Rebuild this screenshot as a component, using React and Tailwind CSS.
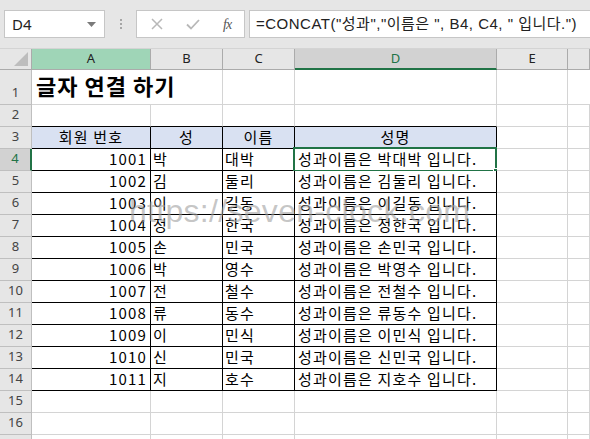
import React from "react";

const rows = [
  ["1001", "박", "대박"],
  ["1002", "김", "둘리"],
  ["1003", "이", "길동"],
  ["1004", "정", "한국"],
  ["1005", "손", "민국"],
  ["1006", "박", "영수"],
  ["1007", "전", "철수"],
  ["1008", "류", "동수"],
  ["1009", "이", "민식"],
  ["1010", "신", "민국"],
  ["1011", "지", "호수"],
];

const KR = { fontFamily: "'Noto Sans CJK KR', 'Noto Sans', sans-serif" };

function ColHeader({ label, variant }) {
  if (variant === "sel") {
    return (
      <div className="flex items-center justify-center bg-[#9fd5b7] border-r border-b border-[#ababab] text-[13px] text-[#222]" style={{ fontFamily: "'Noto Sans', sans-serif" }}>
        {label}
      </div>
    );
  }
  if (variant === "active") {
    return (
      <div className="flex items-center justify-center bg-[#d2d2d2] border-r border-[#ababab] border-b-2 border-b-[#217346] text-[13px] text-[#217346]" style={{ fontFamily: "'Noto Sans', sans-serif" }}>
        {label}
      </div>
    );
  }
  return (
    <div className="flex items-center justify-center bg-[#e6e6e6] border-r border-b border-[#ababab] text-[13px] text-[#222]" style={{ fontFamily: "'Noto Sans', sans-serif" }}>
      {label}
    </div>
  );
}

function RowHeader({ n, active }) {
  return (
    <div
      className={
        active
          ? "flex items-end justify-center pb-[2px] bg-[#d2d2d2] border-b border-[#bfbfbf] border-r-2 border-r-[#217346] text-[13px] text-[#217346]"
          : "flex items-end justify-center pb-[2px] bg-[#e6e6e6] border-b border-r border-[#bfbfbf] text-[13px] text-[#444]"
      }
      style={{ fontFamily: "'Noto Sans', sans-serif" }}
    >
      {n}
    </div>
  );
}

function Cell({ children, black, blackBottom, align = "left", header, className = "" }) {
  const border = black
    ? "border-r border-b border-black"
    : blackBottom
    ? "border-r border-[#d4d4d4] border-b border-b-black"
    : "border-r border-b border-[#d4d4d4]";
  const bg = header ? "bg-[#d9e1f2]" : "bg-white";
  const just = align === "right" ? "justify-end pr-[3px]" : align === "center" ? "justify-center" : "justify-start pl-[2px]";
  return (
    <div className={`relative flex items-end pb-[1px] ${border} ${bg} ${just} text-[15px] leading-[20px] tracking-[1.2px] text-black whitespace-nowrap ${className}`} style={KR}>
      {children}
    </div>
  );
}

export default function App() {
  return (
    <div className="relative w-[590px] h-[439px] overflow-hidden bg-white">
      {/* formula bar */}
      <div className="h-[49px] bg-[#e6e6e6] flex items-center border-b border-[#d4d4d4]">
        <div className="ml-[4px] w-[101px] h-[28px] bg-white border border-[#c6c6c6] flex items-center justify-between pl-[7px] pr-[8px]">
          <span className="text-[15px] text-[#222]" style={{ fontFamily: "'Noto Sans', sans-serif" }}>D4</span>
          <svg width="9" height="5" viewBox="0 0 9 5"><path d="M0 0 L9 0 L4.5 5 Z" fill="#7a7a7a" /></svg>
        </div>
        <div className="w-[31px] flex flex-col items-center gap-[2px]">
          <div className="w-[2px] h-[2px] bg-[#a6a6a6]" />
          <div className="w-[2px] h-[2px] bg-[#a6a6a6]" />
          <div className="w-[2px] h-[2px] bg-[#a6a6a6]" />
        </div>
        <div className="w-[109px] h-[28px] bg-white border border-[#c6c6c6] flex items-center">
          <div className="w-[40px] flex justify-center">
            <svg width="12" height="12" viewBox="0 0 12 12"><path d="M1 1 L11 11 M11 1 L1 11" stroke="#b8b8b8" strokeWidth="1.5" /></svg>
          </div>
          <div className="w-[34px] flex justify-center">
            <svg width="14" height="11" viewBox="0 0 14 11"><path d="M1 5.5 L5 9.5 L13 1" stroke="#b8b8b8" strokeWidth="1.8" fill="none" /></svg>
          </div>
          <div className="w-[34px] flex justify-center">
            <span className="text-[14px] italic text-[#555] tracking-[-1px]" style={{ fontFamily: "'Liberation Serif', serif" }}>fx</span>
          </div>
        </div>
        <div className="ml-[4px] flex-1 h-[28px] bg-white border border-r-0 border-[#c6c6c6] flex items-center pl-[6px] text-[15px] tracking-[0.5px] text-[#222] whitespace-nowrap" style={{ fontFamily: "'Liberation Sans', 'Noto Sans CJK KR', sans-serif" }}>
          =CONCAT("성과","이름은 ", B4, C4, " 입니다.")
        </div>
      </div>

      {/* sheet */}
      <div className="grid grid-cols-[32px_119px_72px_72px_202px_71px_1fr] grid-rows-[21px_35px_repeat(16,22px)]">
        {/* header row */}
        <div className="relative bg-[#e6e6e6] border-r border-b border-[#ababab]">
          <svg className="absolute right-[3px] bottom-[3px]" width="14" height="14" viewBox="0 0 14 14"><path d="M14 0 L14 14 L0 14 Z" fill="#bdbdbd" /></svg>
        </div>
        <ColHeader label="A" variant="sel" />
        <ColHeader label="B" />
        <ColHeader label="C" />
        <ColHeader label="D" variant="active" />
        <ColHeader label="E" />
        <ColHeader label="" />

        {/* row 1 */}
        <RowHeader n="1" />
        <div className="flex items-end pb-[6px] pl-[4px] border-b border-[#d4d4d4] text-[22px] font-bold leading-[26px] tracking-[1px] text-black whitespace-nowrap" style={KR}>
          글자 연결 하기
        </div>
        <div className="border-r border-b border-[#d4d4d4]" />
        <div className="border-r border-b border-[#d4d4d4]" />
        <div className="border-r border-b border-[#d4d4d4]" />
        <div className="border-r border-b border-[#d4d4d4]" />
        <div className="border-b border-[#d4d4d4]" />

        {/* row 2 */}
        <RowHeader n="2" />
        <Cell blackBottom />
        <Cell blackBottom />
        <Cell blackBottom />
        <Cell blackBottom />
        <Cell />
        <Cell />

        {/* row 3 */}
        <RowHeader n="3" />
        <Cell black header align="center">회원 번호</Cell>
        <Cell black header align="center">성</Cell>
        <Cell black header align="center">이름</Cell>
        <Cell black header align="center">성명</Cell>
        <Cell />
        <Cell />

        {rows.map((r, i) => {
          const rn = i + 4;
          const active = rn === 4;
          return (
            <React.Fragment key={rn}>
              <RowHeader n={String(rn)} active={active} />
              <Cell black align="right" className="tracking-[0px]">{r[0]}</Cell>
              <Cell black>{r[1]}</Cell>
              <Cell black>{r[2]}</Cell>
              <Cell black className="pl-[3px]">
                {`성과이름은 ${r[1]}${r[2]} 입니다.`}
                {active && (
                  <div className="absolute left-[-2px] top-[-2px] right-[-1px] bottom-[-2px] border-2 border-[#217346]">
                    <div className="absolute right-[-5px] bottom-[-5px] w-[7px] h-[7px] bg-[#217346] border border-white" />
                  </div>
                )}
              </Cell>
              <Cell />
              <Cell />
            </React.Fragment>
          );
        })}

        {[15, 16].map((rn) => (
          <React.Fragment key={rn}>
            <RowHeader n={String(rn)} />
            <Cell />
            <Cell />
            <Cell />
            <Cell />
            <Cell />
            <Cell />
          </React.Fragment>
        ))}
        <div className="bg-[#e6e6e6] border-r border-b border-[#bfbfbf]" />
        <Cell />
        <Cell />
        <Cell />
        <Cell />
        <Cell />
        <Cell />
      </div>

      {/* watermark */}
      <div
        className="absolute left-[129px] top-[192px] text-[32px] leading-[38px] tracking-[0.3px] text-[rgba(160,160,160,0.6)] whitespace-nowrap pointer-events-none"
        style={{ fontFamily: "'Liberation Sans', sans-serif" }}
      >
        https://seven-clock.com
      </div>
    </div>
  );
}
